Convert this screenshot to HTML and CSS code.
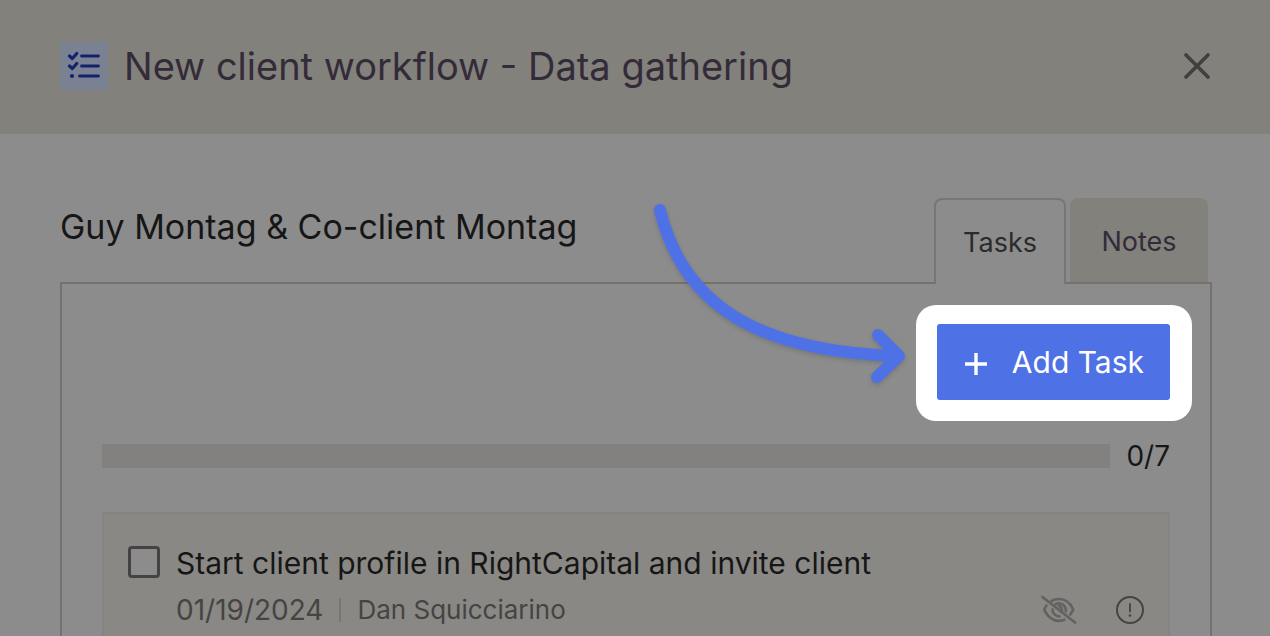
FILE: index.html
```html
<!DOCTYPE html>
<html lang="en">
<head>
<meta charset="utf-8">
<meta name="viewport" content="width=device-width, initial-scale=1">
<title>New client workflow - Data gathering</title>
<link rel="stylesheet" href="styles.css">
</head>
<body>
<header class="header">
  <span class="header-icon">
    <svg width="48" height="48" viewBox="0 0 48 48" fill="none" stroke="currentColor" stroke-width="2.8" stroke-linecap="round" stroke-linejoin="round" aria-hidden="true">
      <path stroke-width="3.2" d="M9.500 14l2.800 2.500 4.500-5M9.500 24l2.800 2.500 4.500-5"/>
      <path d="M21.500 14H38.500M21.500 24H38.500M19.500 34H38.500"/>
      <circle cx="12" cy="34" r="2.100" fill="currentColor" stroke="none"/>
    </svg>
  </span>
  <h1 class="title">New client workflow - Data gathering</h1>
  <button class="close" type="button" aria-label="Close">
    <svg width="26" height="26" viewBox="0 0 26 26" fill="none" stroke="currentColor" stroke-width="3.600" stroke-linecap="round" aria-hidden="true"><path d="M2 2l22 22M24 2L2 24"/></svg>
  </button>
</header>
<main class="content">
  <div class="top-row">
    <h2 class="client">Guy Montag &amp; Co-client Montag</h2>
    <nav class="tabs" role="tablist" aria-label="Workflow">
      <button class="tab tab-active" type="button" role="tab" aria-selected="true">Tasks</button>
      <button class="tab" type="button" role="tab" aria-selected="false">Notes</button>
    </nav>
  </div>
  <section class="panel">
    <div class="actions">
      <button class="add-task" type="button">
        <svg width="22" height="26" viewBox="0 0 22 26" stroke="currentColor" stroke-width="3.400" aria-hidden="true"><path d="M11 4v22M0 15h22"/></svg>
        <span>Add Task</span>
      </button>
    </div>
    <div class="progress-row">
      <div class="progress" role="progressbar" aria-label="Completed tasks" aria-valuemin="0" aria-valuemax="7" aria-valuenow="0"></div>
      <span class="progress-count">0/7</span>
    </div>
    <article class="task">
      <input class="task-check" type="checkbox" id="task-1">
      <label class="task-title" for="task-1">Start client profile in RightCapital and invite client</label>
      <div class="task-meta">
        <span class="due">01/19/2024</span>
        <span class="divider"></span>
        <span class="assignee">Dan Squicciarino</span>
        <svg class="hidden-icon" width="36" height="30" viewBox="0 0 36 30" fill="none" stroke="currentColor" stroke-width="2.700" stroke-linecap="round" aria-hidden="true">
          <path d="M1.500 2L34 27.500"/>
          <path d="M10.500 6C13 4.500 15.500 4 18 4c6.500 0 11.500 4.500 14 10a1.500 1.500 0 0 1 0 1.200c-.8 1.600-1.700 3-2.800 4.300"/>
          <path d="M5.500 10.500c-1 1.200-1.500 2.400-2 3.600a1.500 1.500 0 0 0 0 1.200C6.500 21.200 11.500 25.800 18 25.800c1.900 0 3.700-.4 5.300-1.100"/>
          <path d="M14.500 9.300a7 7 0 0 1 10.300 7M11.500 14.500a6.800 6.800 0 0 0 7 6.800"/>
          <path d="M18 11a4 4 0 0 1 2.500 5.500"/>
        </svg>
        <svg class="alert-icon" width="30" height="30" viewBox="0 0 30 30" fill="none" stroke="currentColor" stroke-width="2" aria-hidden="true">
          <circle cx="15" cy="15" r="13"/>
          <path d="M15 9v7.500" stroke-width="1.800" stroke-linecap="round"/>
          <circle cx="15" cy="20.500" r="1.300" fill="currentColor" stroke="none"/>
        </svg>
      </div>
    </article>
  </section>
</main>
<svg class="arrow" width="270" height="200" viewBox="0 0 270 200" fill="none" stroke="currentColor" stroke-width="12" stroke-linecap="round" stroke-linejoin="round" aria-hidden="true">
  <path d="M20 20C43 115 118 162 259 166M238 145L259 166L237 187"/>
</svg>
</body>
</html>
```

FILE: styles.css
```css
* { box-sizing: border-box; }

body {
  display: flex;
  flex-direction: column;
  margin: 0;
  min-height: 100vh;
  background: #8c8c8c;
  color: #161616;
  font-family: Inter, "Liberation Sans", sans-serif;
  position: relative;
}

button {
  font: inherit;
  border: 0;
  cursor: pointer;
}

svg { display: block; flex: none; }

.header {
  display: flex;
  align-items: center;
  gap: 16px;
  padding: 42px 60px 44px;
  background: #83817c;
  color: #342b39;
}

.header-icon {
  background: #7a8192;
  color: #14226e;
}

.title {
  flex: 1;
  margin: 0;
  font-size: 38px;
  font-weight: 400;
  line-height: 48px;
}

.close {
  padding: 0;
  background: none;
  color: #423f3e;
}

.content {
  display: flex;
  flex: 1;
  flex-direction: column;
  padding: 64px 58px 0 60px;
}

.top-row {
  display: flex;
  justify-content: space-between;
  align-items: flex-start;
  padding-right: 4px;
}

.client {
  margin: 8px 0 0;
  font-size: 34px;
  font-weight: 400;
  line-height: 42px;
}

.tabs {
  display: flex;
  gap: 4px;
}

.tab {
  width: 138px;
  height: 84px;
  padding: 2px 0 0;
  border-radius: 8px 8px 0 0;
  background: #83817c;
  color: #342b39;
  font-size: 27px;
}

.tab-active {
  width: 132px;
  height: 86px;
  margin-bottom: -2px;
  padding: 0;
  border: 2px solid #787675;
  border-bottom: 0;
  background: #8c8c8c;
  color: #2b2b2b;
  z-index: 1;
}

.panel {
  display: flex;
  flex: 1;
  flex-direction: column;
  padding: 40px 40px 0;
  border: 2px solid #77716d;
  border-bottom: 0;
}

.actions {
  display: flex;
  justify-content: flex-end;
  margin-bottom: 44px;
}

.add-task {
  display: flex;
  align-items: center;
  gap: 25px;
  height: 76px;
  padding: 0 26px 0 28px;
  color: #fff;
  font-size: 30px;
  position: relative;
  isolation: isolate;
}

/* White plate with the button's own blue face above it. */
.add-task::before,
.add-task::after {
  content: "";
  position: absolute;
  z-index: -1;
}

.add-task::before {
  inset: -19px -22px -21px -21px;
  border-radius: 20px;
  background: #fff;
}

.add-task::after {
  inset: 0;
  border-radius: 3px;
  background: #4f71e6;
}

.progress-row {
  display: flex;
  align-items: center;
  gap: 16px;
  height: 24px;
  margin-bottom: 44px;
}

.progress {
  flex: 1;
  height: 24px;
  background: #828180;
}

.progress-count { font-size: 28px; }

.task {
  display: grid;
  flex: 1;
  grid-template-columns: 32px 1fr;
  grid-template-rows: auto auto;
  column-gap: 16px;
  align-content: start;
  padding: 26px 23px 0 24px;
  border: 2px solid #868481;
  border-bottom: 0;
  background: #898885;
}

.task-check {
  appearance: none;
  width: 32px;
  height: 32px;
  margin: 6px 0 0;
  border: 3px solid #454241;
  border-radius: 4px;
  background: #8c8c8c;
}

.task-title {
  font-size: 30px;
  line-height: 46px;
}

.task-meta {
  grid-column: 2;
  display: flex;
  align-items: center;
  margin-top: 4px;
  color: #454443;
  font-size: 26px;
  line-height: 40px;
}

.due { font-size: 28px; }

.divider {
  width: 2px;
  height: 24px;
  margin: 0 16px;
  background: #787573;
}

.assignee { flex: 1; }

.hidden-icon {
  margin-right: 38px;
  color: #646260;
}

.arrow {
  position: absolute;
  left: 640px;
  top: 190px;
  z-index: 2;
  color: #4f71e6;
  filter: drop-shadow(0 2px 2px rgba(0, 0, 0, 0.15));
}
```
